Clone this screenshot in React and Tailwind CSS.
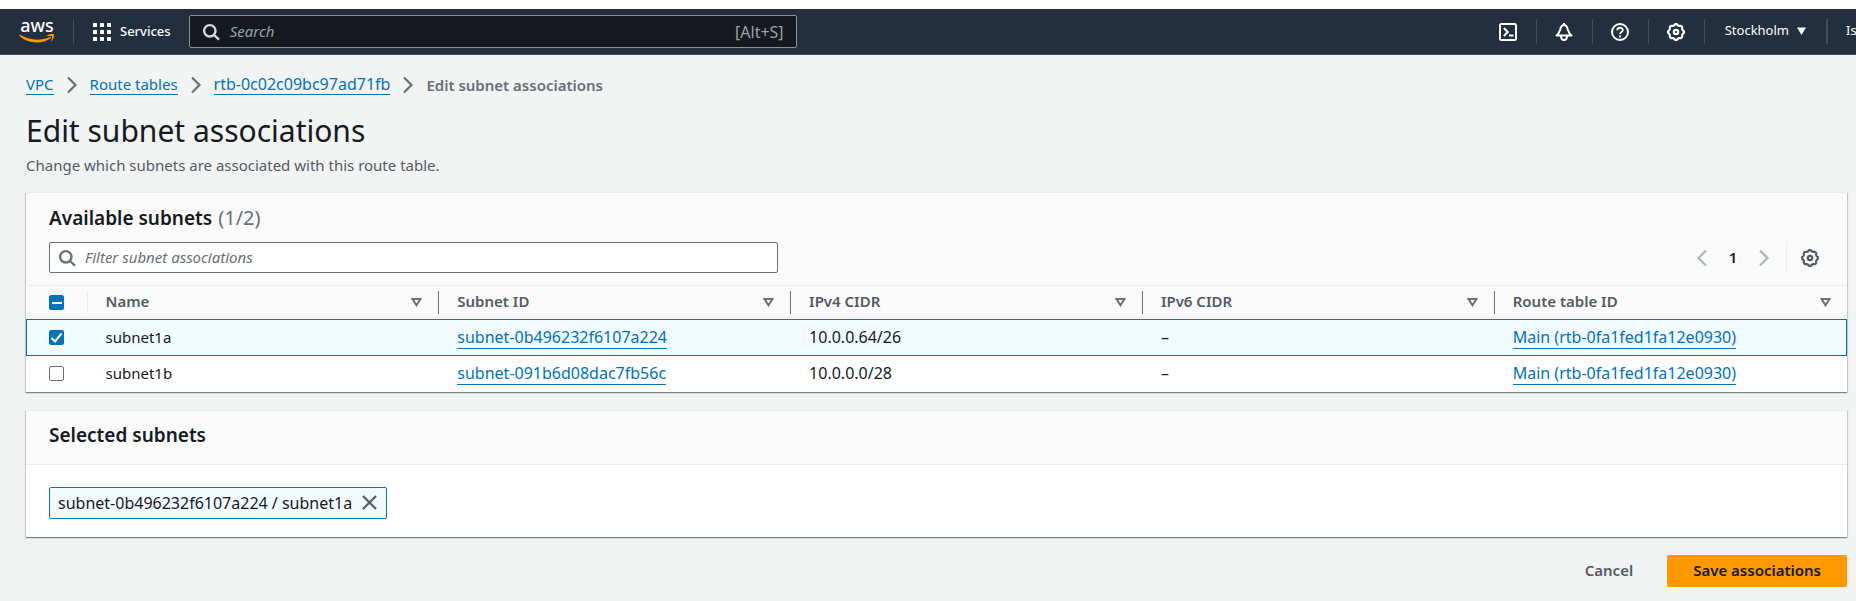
import React from "react";

const gearPoints = Array.from({ length: 96 }, (_, i) => {
  const a = (i / 96) * Math.PI * 2;
  const r = 7.4 + 0.6 * Math.tanh(1.6 * Math.cos(8 * a));
  return `${(9 + r * Math.cos(a)).toFixed(2)},${(9 + r * Math.sin(a)).toFixed(2)}`;
}).join(" ");

function Gear() {
  return (
    <svg className="size-[18px] shrink-0" viewBox="0 0 18 18" fill="none" stroke="currentColor" strokeWidth="2.2" aria-hidden="true">
      <polygon points={gearPoints} strokeLinejoin="round" />
      <circle cx="9" cy="9" r="2.2" />
    </svg>
  );
}

function SearchIcon() {
  return (
    <svg className="size-[18px] shrink-0" viewBox="0 0 18 18" fill="none" stroke="currentColor" strokeWidth="2.4" aria-hidden="true">
      <circle cx="7.8" cy="7.8" r="5.7" />
      <path d="M12 12l5 4.7" />
    </svg>
  );
}

function Chevron({ flip = false }) {
  return (
    <svg className="h-[18px] w-3 shrink-0" viewBox="0 0 12 18" fill="none" stroke="currentColor" strokeWidth="2.2" aria-hidden="true">
      <path d={flip ? "M10 1.5L2.5 9l7.5 7.5" : "M2 1.5L9.5 9 2 16.5"} />
    </svg>
  );
}

function AwsLogo() {
  return (
    <a href="#home" aria-label="AWS home" className="block">
      <svg className="h-6 w-9 overflow-visible" viewBox="0 0 36 24">
        <text x="18" y="12" textAnchor="middle" fontSize="18" fontWeight="500" fontFamily="Noto Sans, sans-serif" fill="#fff">aws</text>
        <path d="M.3 15.2c.3-.5.7-.4 1.2-.1 10 5.7 20 5.9 29.5 1.9.9-.4 1.5.5.7 1.2C23.5 24.4 8.5 24 .6 16c-.3-.3-.4-.5-.3-.8z" fill="#f90" />
        <path d="M28.3 15.3c1.9-1.5 5.5-1.7 6.400-1 .8.8-.2 5-2.100 6.700-.4.3-.7.1-.5-.3.5-1.200 1.400-3.600.9-4.300-.5-.7-3-.4-4.200-.3-.5.1-.8-.4-.5-.8z" fill="#f90" />
      </svg>
    </a>
  );
}

function Divider() {
  return <span className="h-[25px] w-px shrink-0 bg-[#414d5c]" />;
}

function NavButton({ label, children }) {
  return (
    <button type="button" aria-label={label} className="flex w-[55px] items-center justify-center">
      {children}
    </button>
  );
}

function TopNav() {
  return (
    <header className="mt-[9px] flex h-[46px] items-center overflow-hidden border-b border-[#414d5c] bg-[#232f3e] text-white">
      <div className="flex shrink-0 items-center pl-[19px]">
        <AwsLogo />
        <span className="ml-[18px] h-[25px] w-px bg-[#414d5c]" />
        <button type="button" className="ml-[19px] flex items-center gap-[9px] text-[13px] font-medium">
          <svg className="size-[18px]" viewBox="0 0 18 18" fill="currentColor" aria-hidden="true">
            {[0, 7, 14].map((y) => [0, 7, 14].map((x) => <rect key={`${x}-${y}`} x={x} y={y} width="4" height="4" rx=".5" />))}
          </svg>
          Services
        </button>
      </div>
      <label className="ml-[18px] flex h-[33px] w-[608px] items-center gap-[10px] rounded-xs border border-[#879596] bg-[#16191f] px-3 text-[#d5dbdb]">
        <SearchIcon />
        <input type="search" aria-label="Search" placeholder="Search" className="min-w-0 flex-1 bg-transparent text-[15px] outline-none placeholder:text-[#95a5a6] placeholder:italic" />
        <span className="text-base text-[#95a5a6]">[Alt+S]</span>
      </label>
      <div className="ml-auto flex shrink-0 items-center">
        <NavButton label="CloudShell">
          <svg className="size-[18px]" viewBox="0 0 18 18" fill="none" stroke="currentColor" strokeWidth="2" aria-hidden="true">
            <rect x="1" y="1" width="16" height="16" rx="1.5" />
            <path d="M4.8 5l4 4-4 4M10 12.5h4.5" />
          </svg>
        </NavButton>
        <Divider />
        <NavButton label="Notifications">
          <svg className="size-[18px]" viewBox="0 0 18 18" fill="none" stroke="currentColor" strokeWidth="2" strokeLinejoin="round" aria-hidden="true">
            <path d="M9 0v2M1.5 12.5h15c-2.300-1.700-3-3.500-3.700-6C12.200 4 11 2 9 2S5.800 4 5.200 6.500c-.7 2.500-1.400 4.300-3.700 6z" />
            <path d="M6 13c0 5.300 6 5.300 6 0" />
          </svg>
        </NavButton>
        <Divider />
        <NavButton label="Help">
          <svg className="size-[18px]" viewBox="0 0 18 18" fill="none" stroke="currentColor" strokeWidth="2" aria-hidden="true">
            <circle cx="9" cy="9" r="8" />
            <path d="M6.200 7.300C6.200 3.900 11.800 3.900 11.800 7.200 11.800 9 9 9 9 11.300M9 12.500v2" strokeWidth="1.800" />
          </svg>
        </NavButton>
        <Divider />
        <NavButton label="Settings">
          <Gear />
        </NavButton>
        <Divider />
        <button type="button" className="flex items-center gap-2 px-5 pb-[2px] text-[13px]">
          Stockholm
          <svg className="h-2 w-[9px]" viewBox="0 0 9 8" fill="currentColor" aria-hidden="true">
            <path d="M0 .5h9L4.500 8z" />
          </svg>
        </button>
        <span className="h-[25px] w-[2px] bg-[#414d5c]" />
        <button type="button" className="ml-[18px] w-[10px] overflow-hidden pb-[2px] text-left text-[13px]">Is</button>
      </div>
    </header>
  );
}

function TextLink({ href, children }) {
  return (
    <a href={href} className="border-b border-[#0073bb] text-[#0073bb]">
      {children}
    </a>
  );
}

function Breadcrumbs() {
  return (
    <nav aria-label="Breadcrumbs" className="flex items-center gap-3 text-[15px] leading-5 text-[#687078]">
      <TextLink href="#vpc">VPC</TextLink>
      <Chevron />
      <TextLink href="#route-tables">Route tables</TextLink>
      <Chevron />
      <span className="flex text-base leading-5">
        <TextLink href="#rtb">rtb-0c02c09bc97ad71fb</TextLink>
      </span>
      <Chevron />
      <span className="font-semibold">Edit subnet associations</span>
    </nav>
  );
}

function Checkbox({ label, state }) {
  const on = state !== "off";
  return (
    <span className="grid size-[15px]">
      <input
        type="checkbox"
        aria-label={label}
        defaultChecked={on}
        className="col-start-1 row-start-1 size-[15px] appearance-none rounded-xs border border-[#687078] bg-white checked:border-[#0073bb] checked:bg-[#0073bb]"
      />
      {on && (
        <svg className="pointer-events-none z-10 col-start-1 row-start-1 size-[15px]" viewBox="0 0 15 15" fill="none" stroke="#fff" strokeWidth="2" aria-hidden="true">
          <path d={state === "mixed" ? "M3 8h10" : "M2.5 8l3.500 3.500 6.500-8"} />
        </svg>
      )}
    </span>
  );
}

const card = "border-t border-[#eaeded] bg-white shadow-[0_1px_1px_0_rgba(0,28,36,0.3),1px_1px_1px_0_rgba(0,28,36,0.15),-1px_1px_1px_0_rgba(0,28,36,0.15)]";

const columns = ["Name", "Subnet ID", "IPv4 CIDR", "IPv6 CIDR", "Route table ID"];

const rows = [
  { name: "subnet1a", id: "subnet-0b496232f6107a224", cidr: "10.0.0.64/26", selected: true },
  { name: "subnet1b", id: "subnet-091b6d08dac7fb56c", cidr: "10.0.0.0/28", selected: false },
];

function SubnetTable() {
  return (
    <table className="w-full table-fixed border-collapse text-left leading-5">
      <thead>
        <tr className="h-[34px] border-t border-[#eaeded] bg-[#fafafa] text-[15px] text-[#545b64]">
          <th className="w-[61px] p-0">
            <div className="flex h-[23px] items-center border-r border-[#eaeded] pl-[22px]">
              <Checkbox label="Select all subnets" state="mixed" />
            </div>
          </th>
          {columns.map((name, i) => (
            <th key={name} className="p-0 font-semibold">
              <div className={`flex h-[23px] items-center justify-between pr-4 pl-[18px] ${i < columns.length - 1 ? "border-r border-[#687078]" : ""}`}>
                <span className="pb-[3px]">{name}</span>
                <button type="button" aria-label={`Sort by ${name}`}>
                  <svg className="h-[9px] w-[11px]" viewBox="0 0 11 9" fill="none" stroke="#687078" strokeWidth="2" aria-hidden="true">
                    <path d="M1.5 1h8l-4 6.300z" />
                  </svg>
                </button>
              </div>
            </th>
          ))}
        </tr>
      </thead>
      <tbody>
        {rows.map((row) => (
          <tr key={row.id} className={`h-9 text-base leading-5 text-[#16191f] ${row.selected ? "border border-[#0073bb] bg-[#f1faff]" : ""}`}>
            <td className="py-0 pl-[22px]">
              <Checkbox label={`Select ${row.name}`} state={row.selected ? "on" : "off"} />
            </td>
            <td className="pt-0 pb-[2px] pl-[18px] text-[15px]">{row.name}</td>
            <td className="pt-0 pb-[2px] pl-[18px]">
              <TextLink href="#subnet">{row.id}</TextLink>
            </td>
            <td className="pt-0 pb-[2px] pl-[18px]">{row.cidr}</td>
            <td className="pt-0 pb-[2px] pl-[18px]">–</td>
            <td className="pt-0 pb-[2px] pl-[18px]">
              <TextLink href="#main">Main (rtb-0fa1fed1fa12e0930)</TextLink>
            </td>
          </tr>
        ))}
      </tbody>
    </table>
  );
}

export default function App() {
  return (
    <div className="flow-root bg-white font-['Noto_Sans',sans-serif]">
      <TopNav />
      <main className="min-h-[calc(100vh-55px)] bg-[#f2f3f3] pt-[19px] pr-[9px] pb-[14px] pl-[26px] text-[#16191f]">
        <Breadcrumbs />
        <h1 className="mt-4 text-[30px] leading-10">Edit subnet associations</h1>
        <p className="mt-1 text-[15px] leading-5 text-[#545b64]">Change which subnets are associated with this route table.</p>

        <section className={`mt-[17px] ${card}`}>
          <div className="bg-[#fafafa] pt-3 pr-7 pb-3 pl-[23px]">
            <h2 className="flex items-baseline gap-[6px] text-[19px] leading-[26px] font-semibold">
              Available subnets <span className="text-xl leading-[26px] font-normal text-[#687078]">(1/2)</span>
            </h2>
            <div className="mt-[11px] flex items-center justify-between">
              <label className="flex h-[31px] w-[729px] items-center gap-[9px] rounded-xs border border-[#687078] bg-white px-2 text-[#687078]">
                <SearchIcon />
                <input type="text" aria-label="Filter subnet associations" placeholder="Filter subnet associations" className="min-w-0 flex-1 bg-transparent text-[15px] outline-none placeholder:text-[#687078] placeholder:italic" />
              </label>
              <div className="flex items-center text-[#aab7b8]">
                <button type="button" aria-label="Previous page"><Chevron flip /></button>
                <button type="button" className="w-[50px] text-center text-[15px] font-semibold text-[#16191f]">1</button>
                <button type="button" aria-label="Next page"><Chevron /></button>
                <span className="ml-4 h-[31px] w-px bg-[#eaeded]" />
                <button type="button" aria-label="Preferences" className="ml-[14px] text-[#545b64]"><Gear /></button>
              </div>
            </div>
          </div>
          <SubnetTable />
        </section>

        <section className={`mt-[18px] ${card}`}>
          <div className="border-b border-[#eaeded] bg-[#fafafa] px-[23px] pt-[11px] pb-4">
            <h2 className="text-[19px] leading-[26px] font-semibold">Selected subnets</h2>
          </div>
          <div className="px-[23px] pt-[22px] pb-[18px]">
            <div className="inline-flex h-8 items-center gap-[10px] rounded-xs border border-[#0073bb] bg-[#f1faff] pr-[9px] pl-2 align-top text-base">
              subnet-0b496232f6107a224 / subnet1a
              <button type="button" aria-label="Remove subnet1a">
                <svg className="size-[15px]" viewBox="0 0 15 15" fill="none" stroke="#545b64" strokeWidth="2.2" aria-hidden="true">
                  <path d="M1 1l13 13M14 1L1 14" />
                </svg>
              </button>
            </div>
          </div>
        </section>

        <div className="mt-[18px] flex items-center justify-end gap-2 text-[15px] font-semibold">
          <button type="button" className="h-8 px-[26px] text-[#545b64]">Cancel</button>
          <button type="button" className="h-8 rounded-xs bg-[#f90] px-[26px]">Save associations</button>
        </div>
      </main>
    </div>
  );
}
